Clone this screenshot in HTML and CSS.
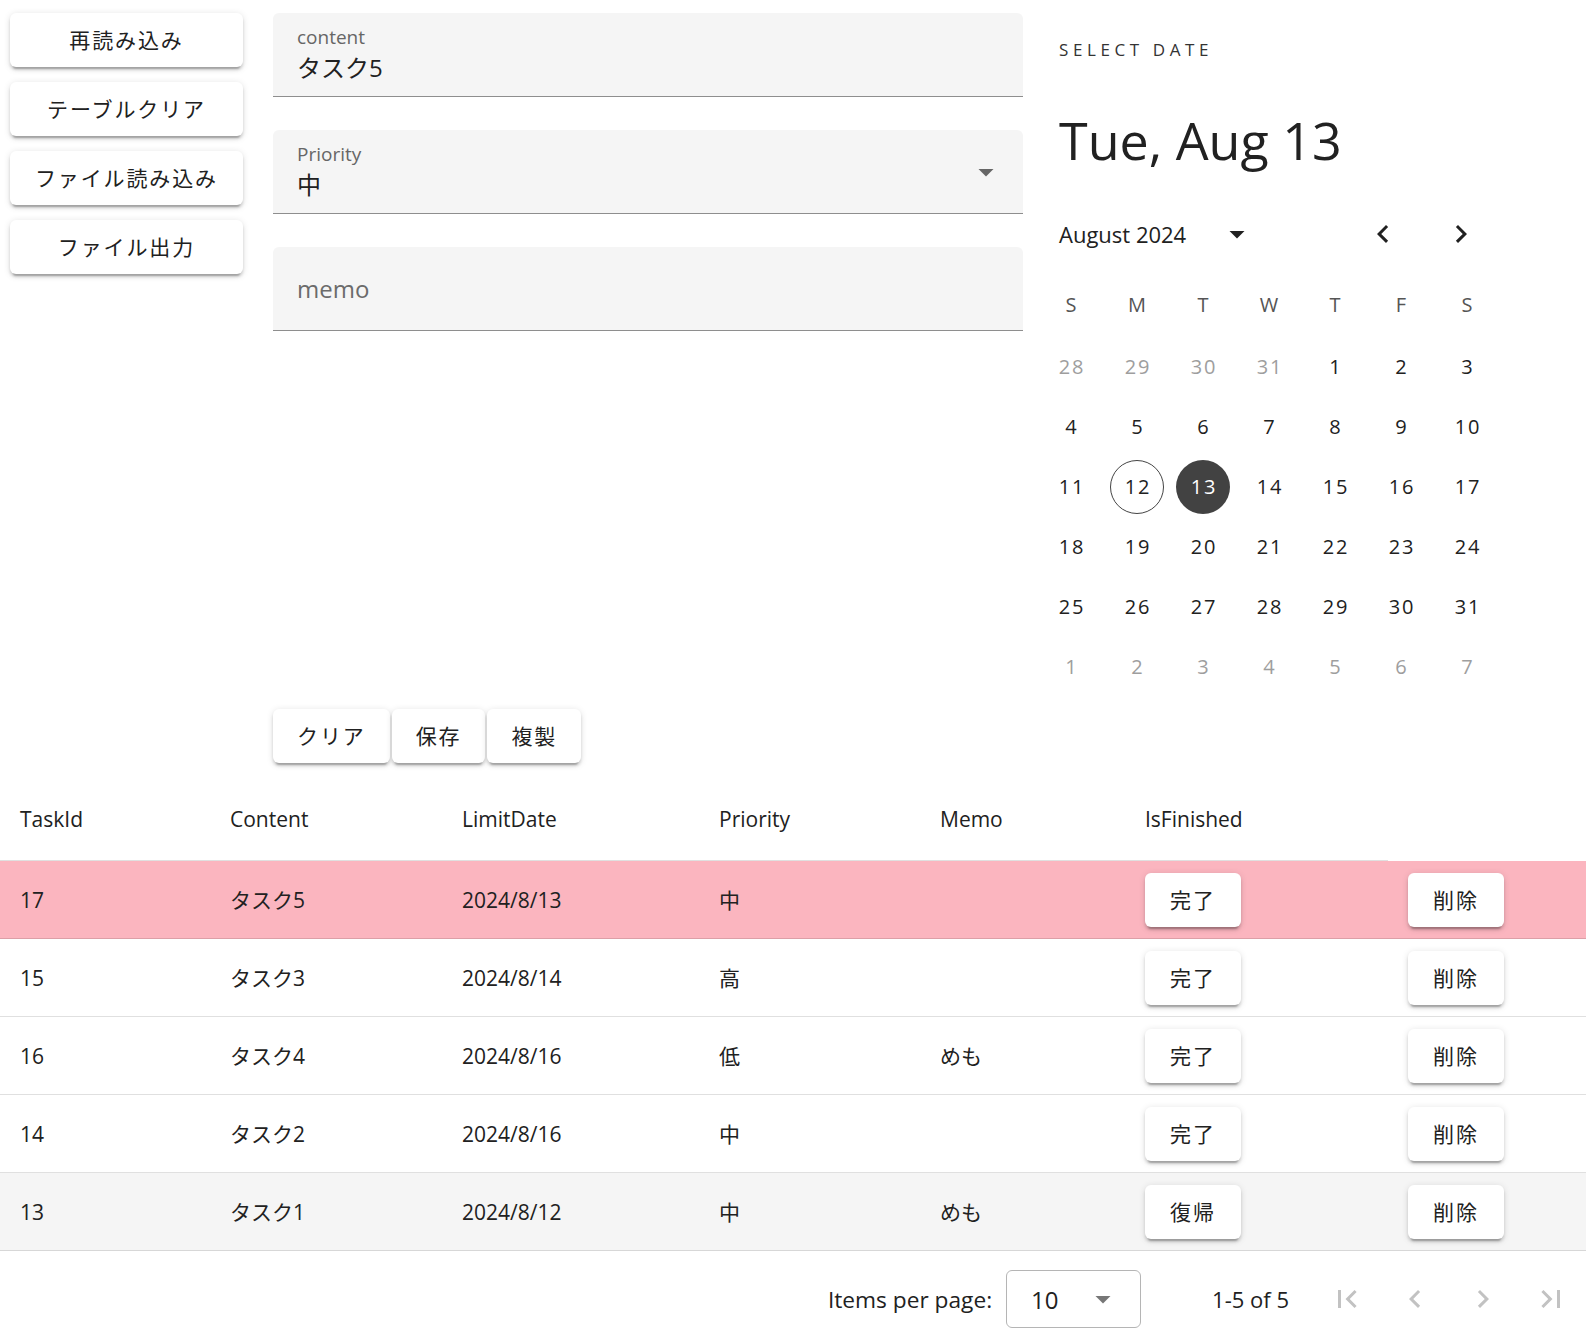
FILE: index.html
```html
<!DOCTYPE html>
<html lang="ja">
<head>
<meta charset="utf-8">
<title>Tasks</title>
<link rel="stylesheet" href="styles.css">
</head>
<body>
<div class="top">
  <div class="side">
    <button class="btn side-btn">再読み込み</button>
    <button class="btn side-btn">テーブルクリア</button>
    <button class="btn side-btn">ファイル読み込み</button>
    <button class="btn side-btn">ファイル出力</button>
  </div>

  <div class="form">
    <div class="field">
      <div class="field-body">
        <span class="field-label">content</span>
        <span class="field-value">タスク5</span>
      </div>
    </div>
    <div class="field">
      <div class="field-body">
        <span class="field-label">Priority</span>
        <span class="field-value">中</span>
      </div>
      <svg class="field-caret" viewBox="0 0 24 24"><path d="M7,10L12,15L17,10H7Z"/></svg>
    </div>
    <div class="field field-empty">
      <span class="field-placeholder">memo</span>
    </div>
  </div>

  <div class="picker">
    <div class="picker-title">SELECT DATE</div>
    <div class="picker-header">Tue, Aug 13</div>
    <div class="picker-controls">
      <span class="month-label">August 2024</span>
      <span class="ctrl-btn caret-btn"><svg viewBox="0 0 24 24"><path d="M7,10L12,15L17,10H7Z"/></svg></span>
      <span class="ctrl-spacer"></span>
      <span class="ctrl-btn"><svg viewBox="0 0 24 24"><path d="M15.41,16.58L10.83,12L15.41,7.41L14,6L8,12L14,18L15.41,16.58Z"/></svg></span>
      <span class="ctrl-btn"><svg viewBox="0 0 24 24"><path d="M8.59,16.58L13.17,12L8.59,7.41L10,6L16,12L10,18L8.59,16.58Z"/></svg></span>
    </div>
    <div class="month">
      <span class="wd">S</span><span class="wd">M</span><span class="wd">T</span><span class="wd">W</span><span class="wd">T</span><span class="wd">F</span><span class="wd">S</span>

      <span class="day other"><span class="num">28</span></span>
      <span class="day other"><span class="num">29</span></span>
      <span class="day other"><span class="num">30</span></span>
      <span class="day other"><span class="num">31</span></span>
      <span class="day"><span class="num">1</span></span>
      <span class="day"><span class="num">2</span></span>
      <span class="day"><span class="num">3</span></span>

      <span class="day"><span class="num">4</span></span>
      <span class="day"><span class="num">5</span></span>
      <span class="day"><span class="num">6</span></span>
      <span class="day"><span class="num">7</span></span>
      <span class="day"><span class="num">8</span></span>
      <span class="day"><span class="num">9</span></span>
      <span class="day"><span class="num">10</span></span>

      <span class="day"><span class="num">11</span></span>
      <span class="day"><span class="num today">12</span></span>
      <span class="day"><span class="num selected">13</span></span>
      <span class="day"><span class="num">14</span></span>
      <span class="day"><span class="num">15</span></span>
      <span class="day"><span class="num">16</span></span>
      <span class="day"><span class="num">17</span></span>

      <span class="day"><span class="num">18</span></span>
      <span class="day"><span class="num">19</span></span>
      <span class="day"><span class="num">20</span></span>
      <span class="day"><span class="num">21</span></span>
      <span class="day"><span class="num">22</span></span>
      <span class="day"><span class="num">23</span></span>
      <span class="day"><span class="num">24</span></span>

      <span class="day"><span class="num">25</span></span>
      <span class="day"><span class="num">26</span></span>
      <span class="day"><span class="num">27</span></span>
      <span class="day"><span class="num">28</span></span>
      <span class="day"><span class="num">29</span></span>
      <span class="day"><span class="num">30</span></span>
      <span class="day"><span class="num">31</span></span>

      <span class="day other"><span class="num">1</span></span>
      <span class="day other"><span class="num">2</span></span>
      <span class="day other"><span class="num">3</span></span>
      <span class="day other"><span class="num">4</span></span>
      <span class="day other"><span class="num">5</span></span>
      <span class="day other"><span class="num">6</span></span>
      <span class="day other"><span class="num">7</span></span>
    </div>
  </div>

  <div class="actions">
    <button class="btn act-btn">クリア</button>
    <button class="btn act-btn">保存</button>
    <button class="btn act-btn">複製</button>
  </div>
</div>

<div class="table">
  <div class="thead">
    <div class="th">TaskId</div>
    <div class="th">Content</div>
    <div class="th">LimitDate</div>
    <div class="th">Priority</div>
    <div class="th">Memo</div>
    <div class="th">IsFinished</div>
    <div class="th th-blank"></div>
  </div>
  <div class="tr tr-active">
    <div class="td">17</div>
    <div class="td">タスク5</div>
    <div class="td">2024/8/13</div>
    <div class="td">中</div>
    <div class="td"></div>
    <div class="td"><button class="btn row-btn">完了</button></div>
    <div class="td"><button class="btn row-btn">削除</button></div>
  </div>
  <div class="tr">
    <div class="td">15</div>
    <div class="td">タスク3</div>
    <div class="td">2024/8/14</div>
    <div class="td">高</div>
    <div class="td"></div>
    <div class="td"><button class="btn row-btn">完了</button></div>
    <div class="td"><button class="btn row-btn">削除</button></div>
  </div>
  <div class="tr">
    <div class="td">16</div>
    <div class="td">タスク4</div>
    <div class="td">2024/8/16</div>
    <div class="td">低</div>
    <div class="td">めも</div>
    <div class="td"><button class="btn row-btn">完了</button></div>
    <div class="td"><button class="btn row-btn">削除</button></div>
  </div>
  <div class="tr">
    <div class="td">14</div>
    <div class="td">タスク2</div>
    <div class="td">2024/8/16</div>
    <div class="td">中</div>
    <div class="td"></div>
    <div class="td"><button class="btn row-btn">完了</button></div>
    <div class="td"><button class="btn row-btn">削除</button></div>
  </div>
  <div class="tr tr-done">
    <div class="td">13</div>
    <div class="td">タスク1</div>
    <div class="td">2024/8/12</div>
    <div class="td">中</div>
    <div class="td">めも</div>
    <div class="td"><button class="btn row-btn">復帰</button></div>
    <div class="td"><button class="btn row-btn">削除</button></div>
  </div>

  <div class="footer">
    <span class="ipp">Items per page:</span>
    <div class="ipp-select">
      <span class="ipp-value">10</span>
      <svg viewBox="0 0 24 24"><path d="M7,10L12,15L17,10H7Z"/></svg>
    </div>
    <span class="range">1-5 of 5</span>
    <div class="pager">
      <span class="pg-btn"><svg viewBox="0 0 24 24"><path d="M18.41,16.59L13.82,12L18.41,7.41L17,6L11,12L17,18L18.41,16.59M6,6H8V18H6V6Z"/></svg></span>
      <span class="pg-btn"><svg viewBox="0 0 24 24"><path d="M15.41,16.58L10.83,12L15.41,7.41L14,6L8,12L14,18L15.41,16.58Z"/></svg></span>
      <span class="pg-btn"><svg viewBox="0 0 24 24"><path d="M8.59,16.58L13.17,12L8.59,7.41L10,6L16,12L10,18L8.59,16.58Z"/></svg></span>
      <span class="pg-btn"><svg viewBox="0 0 24 24"><path d="M5.59,7.41L10.18,12L5.59,16.59L7,18L13,12L7,6L5.59,7.41M16,6H18V18H16V6Z"/></svg></span>
    </div>
  </div>
</div>
</body>
</html>
```

FILE: styles.css
```css
html, body {
  margin: 0;
  padding: 0;
  background: #ffffff;
}
body {
  font-family: "Open Sans", "Noto Sans CJK JP", sans-serif;
  color: #212121;
  font-size: 21px;
}

/* ---------- buttons ---------- */
.btn {
  font-family: "Open Sans", "Noto Sans CJK JP", sans-serif;
  font-size: 21px;
  letter-spacing: 0.0893em;
  color: #212121;
  background: #ffffff;
  border: none;
  border-radius: 6px;
  height: 54px;
  padding: 0 24px;
  box-shadow: 0 4.5px 1.5px -3px rgba(0,0,0,.2), 0 3px 3px 0 rgba(0,0,0,.14), 0 1.5px 7.5px 0 rgba(0,0,0,.12);
  cursor: pointer;
  line-height: 54px;
  white-space: nowrap;
}

/* ---------- top area ---------- */
.top {
  display: grid;
  grid-template-columns: 273px 750px 1fr;
  grid-template-rows: auto auto;
}
.side {
  grid-column: 1;
  grid-row: 1;
  padding: 13px 30px 0 10px;
  display: flex;
  flex-direction: column;
  gap: 15px;
}
.side-btn {
  width: 233px;
  padding: 0;
}

.form {
  grid-column: 2;
  grid-row: 1;
  padding-top: 13px;
  display: flex;
  flex-direction: column;
  gap: 33px;
}
.field {
  height: 84px;
  box-sizing: border-box;
  background: #f5f5f5;
  border-bottom: 1px solid rgba(0,0,0,.42);
  border-radius: 6px 6px 0 0;
  padding: 13px 19px 0 24px;
  display: flex;
}
.field-body {
  flex: 1;
  display: flex;
  flex-direction: column;
}
.field-label {
  font-size: 19px;
  line-height: 23px;
  color: #666666;
}
.field-value {
  font-size: 24px;
  line-height: 34px;
  margin-top: 2px;
  color: #212121;
}
.field-caret {
  width: 36px;
  height: 36px;
  margin-top: 11px;
  fill: #666666;
}
.field-empty {
  padding-top: 0;
  align-items: center;
}
.field-placeholder {
  font-size: 24px;
  line-height: 34px;
  color: #6b6b6b;
}

.actions {
  grid-column: 2;
  grid-row: 2;
  display: flex;
  gap: 2px;
}

/* ---------- date picker ---------- */
.picker {
  grid-column: 3;
  grid-row: 1;
  width: 492px;
  padding-bottom: 12px;
}
.picker-title {
  padding: 36px 0 0 36px;
  font-size: 17px;
  line-height: 28px;
  letter-spacing: 4.6px;
  color: #333333;
}
.picker-header {
  margin-top: 46px;
  padding-left: 36px;
  font-size: 52px;
  line-height: 60px;
  color: #212121;
}
.picker-controls {
  margin-top: 23px;
  height: 82px;
  display: flex;
  align-items: center;
  padding: 0 27px 0 36px;
}
.month-label {
  font-size: 22px;
  color: #212121;
}
.ctrl-btn {
  width: 54px;
  height: 54px;
  display: flex;
  align-items: center;
  justify-content: center;
}
.ctrl-btn svg {
  width: 36px;
  height: 36px;
  fill: #212121;
}
.caret-btn {
  margin-left: 24px;
}
.ctrl-spacer {
  flex: 1;
}
.ctrl-btn + .ctrl-btn {
  margin-left: 24px;
}

.month {
  margin-left: 15px;
  display: grid;
  grid-template-columns: repeat(7, 66px);
  grid-template-rows: 62px repeat(6, 60px);
}
.wd {
  display: flex;
  align-items: center;
  justify-content: center;
  font-size: 20px;
  color: #555555;
  padding-bottom: 4px;
}
.day {
  display: flex;
  align-items: center;
  justify-content: center;
}
.num {
  width: 54px;
  height: 54px;
  box-sizing: border-box;
  border-radius: 50%;
  display: flex;
  align-items: center;
  justify-content: center;
  font-size: 20px;
  letter-spacing: 0.09em;
  text-indent: 0.09em;
  color: #212121;
  padding-bottom: 2px;
}
.other .num {
  color: #9e9e9e;
}
.num.today {
  border: 1.5px solid #444444;
}
.num.selected {
  background: #424242;
  color: #ffffff;
}

/* ---------- table ---------- */
.table {
  margin-top: 14px;
}
.thead,
.tr {
  display: grid;
  grid-template-columns: 210px 232px 257px 221px 205px 263px 1fr;
}
.thead {
  height: 84px;
}
.th {
  display: flex;
  align-items: center;
  padding-left: 20px;
  border-bottom: 1px solid rgba(0,0,0,.12);
  font-size: 21px;
  color: #212121;
}
.th-blank {
  border-bottom: none;
}
.tr {
  height: 78px;
  box-sizing: border-box;
  border-bottom: 1px solid rgba(0,0,0,.12);
  align-items: center;
}
.tr-active {
  background: #fbb5bf;
}
.tr-done {
  background: #f5f5f5;
}
.td {
  padding-left: 20px;
  font-size: 21px;
  line-height: 30px;
  color: #212121;
}
.row-btn {
  padding: 0 25px;
}

/* ---------- footer ---------- */
.footer {
  display: flex;
  justify-content: flex-end;
  align-items: center;
  padding: 19px 1px 8px 0;
}
.ipp {
  font-size: 22.7px;
  color: #212121;
}
.ipp-select {
  margin-left: 14px;
  width: 135px;
  height: 58px;
  box-sizing: border-box;
  border: 1px solid #b5b5b5;
  border-radius: 6px;
  display: flex;
  align-items: center;
  justify-content: space-between;
  padding: 0 19px 0 24px;
}
.ipp-value {
  font-size: 24px;
  color: #212121;
}
.ipp-select svg {
  width: 36px;
  height: 36px;
  fill: #777777;
}
.range {
  margin-left: 71px;
  margin-right: 24px;
  font-size: 22px;
  color: #212121;
}
.pager {
  display: flex;
}
.pg-btn {
  width: 68px;
  height: 54px;
  display: flex;
  align-items: center;
  justify-content: center;
}
.pg-btn svg {
  width: 36px;
  height: 36px;
  fill: #c2c2c2;
}
```
